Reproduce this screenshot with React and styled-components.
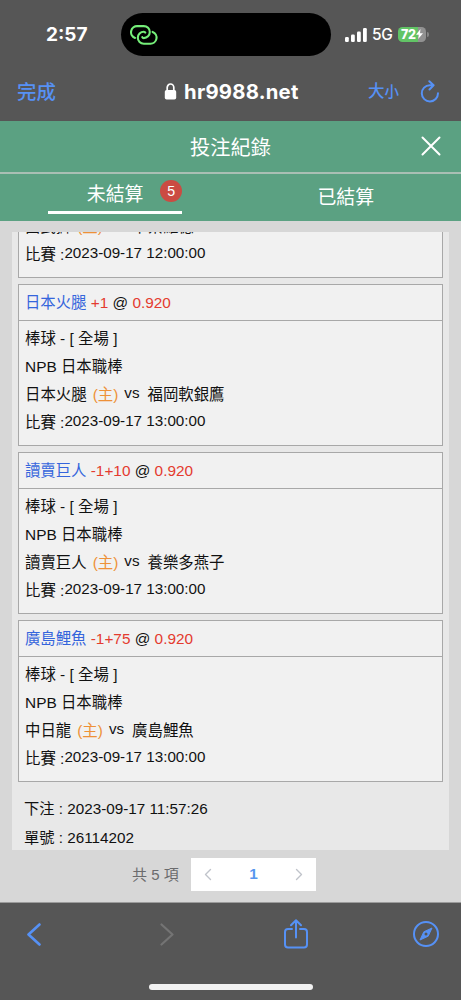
import React from 'react';
import styled, { createGlobalStyle } from 'styled-components';

const Global = createGlobalStyle`
  * { box-sizing: border-box; }
  body { margin: 0; background: #d7d7d7; }
`;
const cjk = `"Liberation Sans", "Noto Sans CJK TC", sans-serif`;
const ios = `Inter, "Noto Sans CJK TC", sans-serif`;

const Phone = styled.div`
  width: 461px; height: 1000px; overflow: hidden;
  display: flex; flex-direction: column;
  background: #d7d7d7; color: #111; font-family: ${cjk};
`;
const StatusBar = styled.div`
  height: 69px; flex: none; background: #565656; color: #fff;
  display: flex; align-items: center; font-family: ${ios};
`;
const Clock = styled.div`
  width: 121px; padding-left: 46px; font-size: 19px; font-weight: 650; line-height: 69px;
`;
const Island = styled.div`
  width: 210px; height: 43px; border-radius: 22px; background: #000;
  display: flex; align-items: center; padding-left: 9px;
`;
const Signals = styled.div`
  display: flex; align-items: center; padding-left: 14px; font-size: 15.5px; line-height: 20px; font-weight: 500;
`;
const Network = styled.span`margin: 1px 0 0 5px; width: 26px; letter-spacing: -0.3px;`;
const Battery = styled.div`
  width: 28px; height: 15px; border-radius: 4.5px; margin-top: -1px;
  background: linear-gradient(90deg, #62c466 72%, #919191 72%);
  display: flex; align-items: center; padding-left: 3px;
  font-size: 12.5px; font-weight: 800; line-height: 15px; letter-spacing: -0.3px;
`;
const BatteryTip = styled.i`width: 1.5px; height: 5px; margin-left: 1px; border-radius: 0 2px 2px 0; background: #858585;`;
const Browser = styled.div`
  height: 52px; flex: none; background: #565656; color: #5691f5;
  display: flex; align-items: center; padding: 0 21px 7px 17px; font-family: ${ios};
`;
const Done = styled.div`width: 147px; font-size: 19.4px; font-weight: 500; line-height: 24px;`;
const Address = styled.div`
  width: 204px; display: flex; align-items: center; gap: 7px; color: #fff;
  font-size: 20.3px; font-weight: 700; line-height: 24px; letter-spacing: 0.25px;
`;
const Size = styled.div`width: 52px; font-size: 16.5px; font-weight: 500; line-height: 24px; small { font-size: 14.5px; }`;
const Title = styled.div`
  height: 53px; flex: none; background: #5ba182; color: #fff; border-bottom: 2px solid #a9bfb4;
  display: grid; grid-template-columns: 60px 1fr 60px; align-items: center; text-align: center;
  font-size: 20.2px; font-weight: 400;
  svg { justify-self: center; margin-top: -1px; }
`;
const Tabs = styled.div`
  height: 47px; flex: none; background: #5ba182; color: #fff; display: flex; font-size: 18.9px; line-height: 28px;
`;
const Tab = styled.div`
  width: 50%; display: flex; justify-content: center; align-items: flex-start;
  padding-top: ${p => (p.$active ? 6 : 10)}px;
`;
const ActiveLabel = styled.div`
  width: 134px; height: 34px; border-bottom: 3px solid #fff; line-height: 30px;
  display: flex; padding-left: 38.5px; justify-content: space-between;
`;
const Badge = styled.span`
  width: 22px; height: 22px; border-radius: 50%; background: #cb4b42;
  font-size: 14.2px; line-height: 22px; text-align: center;
`;
const List = styled.div`
  height: 618px; margin: 11px 12px 0; flex: none; overflow: hidden; background: #e8e8e8;
  padding: 0 6px; display: flex; flex-direction: column; justify-content: flex-end; gap: 6px;
`;
const Card = styled.div`
  height: ${p => (p.$tail ? 46 : 162)}px; flex: none; overflow: hidden;
  border: 1px solid #a8a8a8; border-top-width: ${p => (p.$tail ? 0 : 1)}px; background: #f1f1f1;
  display: flex; flex-direction: column; justify-content: ${p => (p.$tail ? 'flex-end' : 'flex-start')};
  font-size: 15.42px; font-weight: 400;
`;
const Pick = styled.div`
  height: 36px; flex: none; border-bottom: 1px solid #a8a8a8; padding: 1px 0 0 6px; line-height: 34px;
  white-space: pre; color: #e43b2f; font-size: 15.37px;
`;
const Team = styled.span`color: #3565dc;`;
const At = styled.span`color: #111;`;
const Details = styled.div`padding: 4px 0 8px 6px; flex: none;`;
const Line = styled.div`height: 28px; line-height: 27px; white-space: pre; display: flex;`;
const Home = styled.span`color: #ee9138; margin: 0 6px 0 6px;`;
const Raised = styled.span`line-height: 23px; font-size: 15.2px;`;
const Versus = styled(Raised)`margin-right: 8px;`;
const Slip = styled.div`
  height: 62px; flex: none; padding: 6px 0 0 6px; font-size: 15.25px; line-height: 29px; white-space: pre;
`;
const Footer = styled.div`
  height: 53px; flex: none; display: flex; align-items: center; padding: 0 0 4px 132px;
  color: #6b6b6d; font-size: 15.4px; border-bottom: 1px solid #9b9b9b;
`;
const Count = styled.div`width: 59px; white-space: nowrap; font-size: 15px; padding-bottom: 2px;`;
const Pager = styled.div`
  width: 125px; height: 33px; background: #fff; display: flex; align-items: center;
  justify-content: space-between; padding: 0 13px; color: #5797ef; font-weight: 700; font-size: 15.4px;
`;
const Toolbar = styled.div`
  flex: 1; background: #565656; display: flex; flex-direction: column; align-items: center;
`;
const Actions = styled.div`
  width: 100%; height: 64px; display: grid; align-items: center; padding: 0 0 2px 27px;
  grid-template-columns: 133px 124px 128px 28px;
`;
const HomeBar = styled.div`width: 164px; height: 6px; margin-top: 17px; border-radius: 3px; background: #f1f1f1;`;

function Chevron({ right, w, h, color, stroke }) {
  const a = 1.5, b = w - 1.5;
  return (
    <svg width={w} height={h} fill="none" stroke={color} strokeWidth={stroke} strokeLinecap="round" strokeLinejoin="round">
      <path d={right ? `M${a} 1.5L${b} ${h / 2}L${a} ${h - 1.5}` : `M${b} 1.5L${a} ${h / 2}L${b} ${h - 1.5}`} />
    </svg>
  );
}

const bets = [
  { tail: true, home: '西武獅', away: '千葉羅德', time: '12:00:00' },
  { team: '日本火腿', odd: '+1', home: '日本火腿', away: '福岡軟銀鷹', time: '13:00:00' },
  { team: '讀賣巨人', odd: '-1+10', home: '讀賣巨人', away: '養樂多燕子', time: '13:00:00' },
  { team: '廣島鯉魚', odd: '-1+75', home: '中日龍', away: '廣島鯉魚', time: '13:00:00' },
];

function Bet({ tail, team, odd, home, away, time }) {
  return (
    <Card $tail={tail}>
      {!tail && <Pick><Team>{team}</Team> {odd} <At>@</At> 0.920</Pick>}
      <Details>
        {!tail && <Line>棒球 - [ 全場 ]</Line>}
        {!tail && <Line>NPB 日本職棒</Line>}
        <Line>{home}<Home>(主)</Home><Versus>vs</Versus>{away}</Line>
        <Line>比賽 :<Raised>2023-09-17 {time}</Raised></Line>
      </Details>
    </Card>
  );
}

export default function App() {
  return (
    <Phone>
      <Global />
      <StatusBar>
        <Clock>2:57</Clock>
        <Island>
          <svg width="28" height="22" viewBox="0 0 28 22" fill="none" stroke="#75ee79" strokeWidth="2.1" strokeLinecap="round">
            <path d="M5 13.900A6.100 6.100 0 0 1 7.500 2.100h6.300a6 6 0 0 1 0 12c-.8 0-1.300-.3-1.500-.9" />
            <path d="M22.600 7.900A6.100 6.100 0 0 1 20.100 19.700h-6.300a6 6 0 0 1 0-12c.8 0 1.300.3 1.500.9" />
          </svg>
        </Island>
        <Signals>
          <svg width="22" height="14" fill="#fff">
            <rect x="0" y="9" width="3.8" height="5" rx="1.2" />
            <rect x="6" y="6.5" width="3.8" height="7.5" rx="1.2" />
            <rect x="12" y="3.5" width="3.8" height="10.5" rx="1.2" />
            <rect x="18" y="0" width="3.8" height="14" rx="1.2" />
          </svg>
          <Network>5G</Network>
          <Battery>
            72
            <svg width="7" height="10" viewBox="0 0 7 10" fill="#fff"><path d="M4.5 0L0 5.7h2.8L2.2 10 7 4.2H4z" /></svg>
          </Battery>
          <BatteryTip />
        </Signals>
      </StatusBar>
      <Browser>
        <Done>完成</Done>
        <Address>
          <svg width="13" height="17" viewBox="0 0 13 17">
            <rect x="0.8" y="7" width="11.4" height="9.5" rx="1.8" fill="#fff" />
            <path d="M3.2 8V4.6a3.3 3.6 0 0 1 6.6 0V8" fill="none" stroke="#fff" strokeWidth="1.7" />
          </svg>
          hr9988.net
        </Address>
        <Size>大<small>小</small></Size>
        <svg width="20" height="23" viewBox="0 0 20 23" fill="none" stroke="#5691f5" strokeWidth="2" strokeLinecap="round" strokeLinejoin="round">
          <path d="M18 13.2A8.1 8.1 0 1 1 9.8 5.2h3.5M9.3 1.2l4.3 4.1-4.1 4.2" />
        </svg>
      </Browser>
      <Title>
        <span />
        <span>投注紀錄</span>
        <svg width="20" height="20" fill="none" stroke="#fff" strokeWidth="2" strokeLinecap="round">
          <path d="M1.5 1.5l17 17M18.5 1.5l-17 17" />
        </svg>
      </Title>
      <Tabs>
        <Tab $active><ActiveLabel>未結算<Badge>5</Badge></ActiveLabel></Tab>
        <Tab>已結算</Tab>
      </Tabs>
      <List>
        {bets.map((bet) => <Bet key={bet.home} {...bet} />)}
        <Slip>
          <div>下注 : 2023-09-17 11:57:26</div>
          <div>單號 : 26114202</div>
        </Slip>
      </List>
      <Footer>
        <Count>共 5 項</Count>
        <Pager>
          <Chevron w={8} h={13} color="#c0c3ca" stroke={1.4} />
          <span>1</span>
          <Chevron right w={8} h={13} color="#c0c3ca" stroke={1.4} />
        </Pager>
      </Footer>
      <Toolbar>
        <Actions>
          <Chevron w={14} h={23} color="#5691f5" stroke={2.6} />
          <Chevron right w={14} h={23} color="#747474" stroke={2.2} />
          <svg width="24" height="30" fill="none" stroke="#5691f5" strokeWidth="2" strokeLinecap="round" strokeLinejoin="round">
            <path d="M8 10H4a3 3 0 0 0-3 3v12.500a3 3 0 0 0 3 3h16a3 3 0 0 0 3-3V13a3 3 0 0 0-3-3h-4M12 18.500V1.500M7 6.200l5-5 5 5" />
          </svg>
          <svg width="28" height="28" fill="none" stroke="#5691f5" strokeWidth="2">
            <circle cx="14" cy="14" r="12" />
            <path d="M20 8l-3.800 8.200-8.200 3.800 3.800-8.200z" fill="#5691f5" strokeWidth="1" strokeLinejoin="round" />
            <circle cx="14" cy="14" r="1.500" fill="#565656" stroke="none" />
          </svg>
        </Actions>
        <HomeBar />
      </Toolbar>
    </Phone>
  );
}
